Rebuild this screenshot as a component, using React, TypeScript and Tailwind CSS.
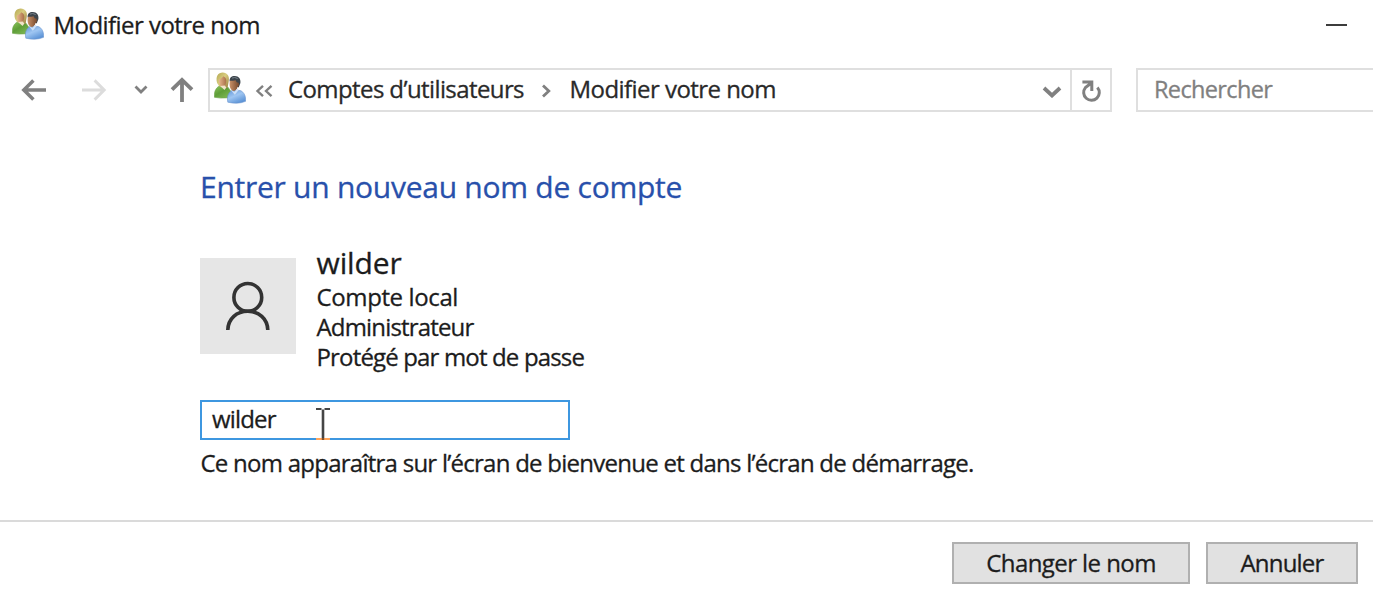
import type { ReactNode } from "react";

function UsersIcon({ id }: { id: string }) {
  return (
    <svg className="h-8 w-8 shrink-0" viewBox="0 0 32 32" aria-hidden="true">
      <defs>
        <linearGradient id={`${id}-green`} x1="0" y1="0" x2="0.8" y2="1">
          <stop offset="0" stopColor="#8fc65c" />
          <stop offset="0.5" stopColor="#5f9e38" />
          <stop offset="1" stopColor="#7fb855" />
        </linearGradient>
        <linearGradient id={`${id}-blue`} x1="0" y1="0" x2="0.6" y2="1">
          <stop offset="0" stopColor="#6396d8" />
          <stop offset="0.5" stopColor="#9fc6f2" />
          <stop offset="1" stopColor="#5c93d6" />
        </linearGradient>
        <linearGradient id={`${id}-hair`} x1="0" y1="0" x2="1" y2="1">
          <stop offset="0" stopColor="#b5a851" />
          <stop offset="0.45" stopColor="#d8cc80" />
          <stop offset="1" stopColor="#94783a" />
        </linearGradient>
        <linearGradient id={`${id}-skin`} x1="0" y1="0" x2="1" y2="0">
          <stop offset="0" stopColor="#e8b88f" />
          <stop offset="1" stopColor="#a86f48" />
        </linearGradient>
        <linearGradient id={`${id}-tan`} x1="0" y1="0" x2="1" y2="0">
          <stop offset="0" stopColor="#c99168" />
          <stop offset="1" stopColor="#75482c" />
        </linearGradient>
      </defs>
      <path d="M0.4 25.3C-0.2 19 2.6 14.6 6.5 13.8L14 15.2L17 19.5L14 25.8Q6 26.6 0.4 25.3Z" fill={`url(#${id}-green)`} stroke="#6da24a" strokeWidth="0.6" />
      <path d="M3.1 11C1.3 4.4 4.2 0.5 8.7 0.5C13.2 0.5 15.8 4 14.7 9.3L13.6 15.4L10.2 16.8L5 14Z" fill={`url(#${id}-hair)`} />
      <path d="M4.8 7.4C6.6 7 8.4 5.6 9.3 4.2C11.7 5.2 12.7 7.2 12.2 10C11.8 12.8 10.7 14.7 9 14.8C6.2 14.6 4.7 11 4.8 7.4Z" fill={`url(#${id}-skin)`} />
      <path d="M6.2 14L10.5 18L12.3 15.4L10.7 13.6Z" fill="#efe3c9" />
      <path d="M13.8 30.2C12.6 24 14.5 20.2 18 18.4L26.1 18.5C30.3 20 32 24.6 31.6 29.3Q24 32.6 13.8 30.2Z" fill={`url(#${id}-blue)`} stroke="#6b96cf" strokeWidth="0.6" />
      <path d="M15.6 9.2C15.4 5.5 17.6 3.8 20.8 3.9C24.8 4 27 6.8 26.4 11L24.7 15.5L21 13Z" fill="#3d454c" />
      <path d="M16 8.7C18 8.5 20.3 8.8 21.7 8.2C22.2 9.9 22.9 10.7 24.5 10.7C25.5 11.7 25 14.3 23.6 14.9C22.9 17.3 21.5 18.9 19.4 18.9C16.4 18.5 14.8 13.3 16 8.7Z" fill={`url(#${id}-tan)`} />
      <path d="M17.2 18.5L20.8 22.8L24.7 18.1L23.2 16.8L20.5 19.8Z" fill="#cde0f7" />
      <path d="M18 6.1Q20.6 4.6 23.7 6.6" fill="none" stroke="#75818b" strokeWidth="1" />
    </svg>
  );
}

function Stroke({ className, viewBox, d, width }: { className: string; viewBox: string; d: string; width: number }) {
  return (
    <svg className={`shrink-0 ${className}`} viewBox={viewBox} fill="none" stroke="currentColor" strokeWidth={width} aria-hidden="true">
      <path d={d} />
    </svg>
  );
}

function DialogButton({ className, children }: { className: string; children: ReactNode }) {
  return (
    <button className={`flex h-[42px] items-center justify-center border-2 border-[#b0b0b0] bg-[#e1e1e1] ${className}`}>
      {children}
    </button>
  );
}

export default function App() {
  return (
    <div className="flex h-[591px] w-[1373px] flex-col overflow-hidden bg-white font-['Open_Sans','Noto_Sans',sans-serif] text-[24px] leading-[30px] whitespace-nowrap text-[#1c1c1c] [-webkit-text-stroke:0.3px]">
      <header className="flex h-[50px] shrink-0 items-center pl-3">
        <div className="-mt-[2px]"><UsersIcon id="title" /></div>
        <h1 className="ml-[9.5px] tracking-[-0.55px]">Modifier votre nom</h1>
        <button className="mr-[26px] ml-auto h-[2px] w-[21px] bg-[#3c3c3c]" aria-label="Réduire" />
      </header>

      <nav className="mt-[18px] flex h-11 shrink-0 items-center text-[#808080]">
        <Stroke className="ml-[21px] h-6 w-[26px]" viewBox="0 0 26 24" d="M25 12H3M12.4 2.4L2.8 12L12.4 21.6" width={3.5} />
        <Stroke className="ml-[34px] h-6 w-[26px] text-[#dcdcdc]" viewBox="0 0 26 24" d="M1 12H23M13.6 2.4L23.2 12L13.6 21.6" width={2.9} />
        <Stroke className="ml-[27px] h-3 w-[14px]" viewBox="0 0 14 12" d="M1.5 2.5L7 8L12.5 2.5" width={2.8} />
        <Stroke className="ml-[22px] h-[26px] w-6" viewBox="0 0 24 26" d="M12 25V3M2 12.7L12 2.8L22 12.7" width={3.8} />
        <div className="ml-[14px] flex h-11 w-[904px] border-2 border-[#dfdfdf]">
          <div className="flex flex-1 items-center pl-[4px]">
            <div className="-mt-1"><UsersIcon id="path" /></div>
            <Stroke className="mt-px ml-[9px] h-[14px] w-[18px]" viewBox="0 0 18 14" d="M8 1.8L2.5 7L8 12.2M16.5 1.8L11 7L16.5 12.2" width={2.4} />
            <span className="-mt-[2px] ml-[15px] w-[240px] tracking-[-0.6px] text-[#292929]">Comptes d’utilisateurs</span>
            <Stroke className="mt-px ml-[12px] h-[14px] w-[12px]" viewBox="0 0 12 14" d="M3 1.5L8.8 7L3 12.5" width={2.8} />
            <span className="-mt-[2px] ml-[17.5px] tracking-[-0.55px] text-[#292929]">Modifier votre nom</span>
            <Stroke className="mt-[4px] mr-[8px] ml-auto h-3 w-5" viewBox="0 0 20 12" d="M2 2L10 9.5L18 2" width={3.8} />
          </div>
          <div className="flex w-[40px] items-center justify-center border-l-2 border-[#dfdfdf]">
            <svg className="mt-px h-6 w-6" viewBox="0 0 24 24" fill="none" stroke="currentColor" strokeWidth="3" aria-hidden="true">
              <path d="M3.4 3H12.8V12M12 4.2L6.4 8.6A7.8 7.8 0 1 0 18.4 8.4" />
            </svg>
          </div>
        </div>
        <div className="ml-6 flex h-11 flex-1 items-center border-2 border-r-0 border-[#dfdfdf] pl-4">
          <span className="-mt-[2px] text-[23.5px] tracking-[-0.65px]">Rechercher</span>
        </div>
      </nav>

      <main className="flex h-[408px] shrink-0 flex-col items-start pt-[55px] pl-[200px]">
        <h2 className="text-[30px] leading-10 tracking-[-0.26px] text-[#2850ab]">Entrer un nouveau nom de compte</h2>
        <section className="mt-[36px] flex h-[129px]">
          <div className="mt-[15px] flex h-24 w-24 items-center justify-center bg-[#e6e6e6]">
            <svg className="h-[50px] w-[46px]" viewBox="0 0 46 50" fill="none" stroke="#333333" strokeWidth="3.6" aria-hidden="true">
              <circle cx="22.8" cy="16.4" r="13.9" />
              <path d="M2.8 49C3.1 37.5 11.8 30.3 22.8 30.3S42.5 37.5 42.8 49" />
            </svg>
          </div>
          <div className="ml-[20.5px]">
            <p className="text-[30px] leading-[39px] tracking-[-0.1px]">wilder</p>
            <p className="tracking-[-0.38px]">Compte local</p>
            <p className="tracking-[-0.83px]">Administrateur</p>
            <p className="tracking-[-0.84px]">Protégé par mot de passe</p>
          </div>
        </section>
        <div className="relative mt-[28px] flex h-[40px] w-[370px] items-center border-2 border-[#3e97e0] pl-[10px]">
          <span className="-mt-[2px] tracking-[-0.85px]">wilder</span>
          <svg className="absolute top-[6px] left-[114px] h-8 w-[14px]" viewBox="0 0 14 32" fill="none" aria-hidden="true">
            <path d="M0 1H5.5M8.5 1H14" stroke="#454545" strokeWidth="2" />
            <path d="M7 1.5V30" stroke="#454545" strokeWidth="2.6" />
            <path d="M0 31H14" stroke="#ffa45a" strokeWidth="2" />
            <path d="M7 30V32" stroke="#80502c" strokeWidth="2.4" />
          </svg>
        </div>
        <p className="mt-2 ml-[0.5px] tracking-[-0.745px]">Ce nom apparaîtra sur l’écran de bienvenue et dans l’écran de démarrage.</p>
      </main>

      <footer className="flex flex-1 items-start justify-end gap-4 border-t-2 border-[#dadada] pt-5 pr-[15px]">
        <DialogButton className="w-[238px] tracking-[-0.57px]">Changer le nom</DialogButton>
        <DialogButton className="w-[152px] tracking-[-0.8px]">Annuler</DialogButton>
      </footer>
    </div>
  );
}
